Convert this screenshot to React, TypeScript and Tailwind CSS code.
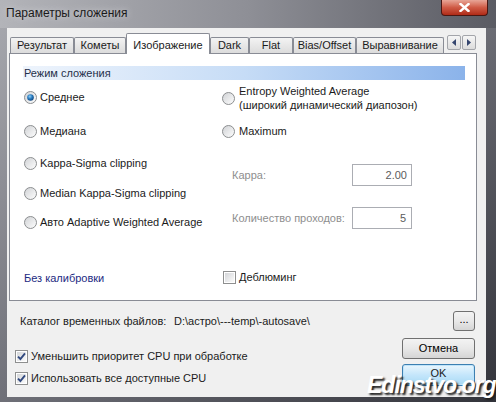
import type { ReactNode } from 'react'

const tabs = [
  { label: 'Результат', w: 'w-[64px]' },
  { label: 'Кометы', w: 'w-[52px]' },
  { label: 'Изображение', w: 'w-[84px]', active: true },
  { label: 'Dark', w: 'w-[39px]' },
  { label: 'Flat', w: 'w-[44px]' },
  { label: 'Bias/Offset', w: 'w-[63px]' },
  { label: 'Выравнивание', w: 'w-[88px]' },
]

function Radio({ checked }: { checked?: boolean }) {
  return (
    <svg width="13" height="13" viewBox="0 0 13 13" className="shrink-0">
      <defs>
        <linearGradient id="rb" x1="0" y1="0" x2="1" y2="1">
          <stop offset="0" stopColor="#cfd1d4" />
          <stop offset="1" stopColor="#ffffff" />
        </linearGradient>
        <radialGradient id="rd" cx="0.4" cy="0.35" r="0.75">
          <stop offset="0" stopColor="#8fd0f7" />
          <stop offset="0.45" stopColor="#2a7cc0" />
          <stop offset="1" stopColor="#0b3a70" />
        </radialGradient>
      </defs>
      <circle cx="6.5" cy="6.5" r="6" fill="url(#rb)" stroke="#8c8e90" />
      {checked && <circle cx="6.5" cy="6.5" r="3.3" fill="url(#rd)" />}
    </svg>
  )
}

function Check({ checked }: { checked?: boolean }) {
  return (
    <svg width="13" height="13" viewBox="0 0 13 13" className="shrink-0">
      <defs>
        <linearGradient id="cb" x1="0" y1="0" x2="1" y2="1">
          <stop offset="0" stopColor="#d3d5d8" />
          <stop offset="1" stopColor="#fbfbfb" />
        </linearGradient>
      </defs>
      <rect x="0.5" y="0.5" width="12" height="12" fill="#fff" stroke="#8e8f8f" />
      <rect x="2" y="2" width="9" height="9" fill="url(#cb)" />
      {checked && (
        <path d="M3 6.6 L5.4 9 L10 3.4" fill="none" stroke="#31497f" strokeWidth="1.9" />
      )}
    </svg>
  )
}

function RadioRow({ children, checked, gap = 'gap-[3px]' }: { children: ReactNode; checked?: boolean; gap?: string }) {
  return (
    <div className={`flex h-[20px] items-center whitespace-nowrap ${gap}`}>
      <Radio checked={checked} />
      <span>{children}</span>
    </div>
  )
}

function Arrow({ dir }: { dir: 'l' | 'r' }) {
  return (
    <div className="flex h-[15px] w-[14px] items-center justify-center rounded-[2px] border border-[#a3a5aa] bg-gradient-to-b from-[#f6f6f6] to-[#dcdcdc]">
      <svg width="4" height="7" viewBox="0 0 4 7">
        <path d={dir === 'l' ? 'M4 0 L0 3.5 L4 7 Z' : 'M0 0 L4 3.5 L0 7 Z'} fill="#34456e" />
      </svg>
    </div>
  )
}

function Btn({ children, className = '' }: { children: ReactNode; className?: string }) {
  return (
    <div
      className={`flex items-center justify-center rounded-[3px] border border-[#707070] bg-gradient-to-b from-[#f3f3f3] via-[#e8e8e8] to-[#d5d5d5] text-[#000] ${className}`}
    >
      {children}
    </div>
  )
}

export default function App() {
  return (
    <div className="relative flex h-[402px] w-[496px] flex-col overflow-hidden whitespace-nowrap bg-gradient-to-br from-[#a9aab0] via-[#6f7078] to-[#33343b] font-['Liberation_Sans',sans-serif] text-[11px] text-[#1b1b1b]">
      {/* Заголовок окна */}
      <div className="flex h-[28px] shrink-0 items-start bg-gradient-to-r from-[#b3b4b9] via-[#8e8f96] to-[#5a5b63]">
        <span className="pl-[6px] pt-[4px] text-[12px] text-[#1a1a1a] [text-shadow:0_0_6px_#d8d8dc]">
          Параметры сложения
        </span>
        <div className="ml-auto mr-[8px] flex h-[16px] w-[47px] items-center justify-center rounded-b-[4px] border border-t-0 border-[#4a1712] bg-gradient-to-b from-[#e7a597] via-[#cf5a45] to-[#b02a16]">
          <svg width="11" height="9" viewBox="0 0 11 9">
            <path d="M1.5 1 L9.5 8 M9.5 1 L1.5 8" stroke="#fff" strokeWidth="2.4" strokeLinecap="square" />
          </svg>
        </div>
      </div>

      <div className="flex flex-1">
        <div className="w-[7px]" />
        <div className="flex w-[479px] flex-col bg-[#f0f0f0]">
          {/* Вкладки */}
          <div className="ml-[2px] mt-[5px] flex h-[20px] w-[468px] items-end">
            <div className="ml-[1px] flex h-full items-end">
              {tabs.map((t) =>
                t.active ? (
                  <div
                    key={t.label}
                    className={`relative z-10 -mb-[1px] flex h-[21px] ${t.w} items-start justify-center rounded-t-[2px] border border-b-0 border-[#898c95] bg-white pt-[3px]`}
                  >
                    {t.label}
                  </div>
                ) : (
                  <div
                    key={t.label}
                    className={`flex h-[16px] ${t.w} items-center justify-center rounded-t-[2px] border border-b-0 border-[#898c95] bg-gradient-to-b from-[#f3f3f3] to-[#dcdcdc]`}
                  >
                    {t.label}
                  </div>
                ),
              )}
            </div>
            <div className="mb-auto ml-auto mr-[1px] mt-[2px] flex gap-[1px]">
              <Arrow dir="l" />
              <Arrow dir="r" />
            </div>
          </div>

          <div className="ml-[2px] flex h-[248px] w-[468px] flex-col border border-[#898c95] bg-white">
            <div className="ml-[13px] mt-[12px] flex h-[14px] w-[442px] items-center bg-gradient-to-r from-[#eef4fc] via-[#c6dcf6] to-[#8bb3ea] pl-[1px] text-[#1f2f4a]">
              Режим сложения
            </div>

            <div className="flex">
              <div className="ml-[14px] flex w-[198px] flex-col">
                <div className="mt-[7px]">
                  <RadioRow checked>Среднее</RadioRow>
                </div>
                <div className="mt-[14px]">
                  <RadioRow>Медиана</RadioRow>
                </div>
                <div className="mt-[12px]">
                  <RadioRow>Kappa-Sigma clipping</RadioRow>
                </div>
                <div className="mt-[10px]">
                  <RadioRow>Median Kappa-Sigma clipping</RadioRow>
                </div>
                <div className="mt-[9px]">
                  <RadioRow>Авто Adaptive Weighted Average</RadioRow>
                </div>
                <div className="mt-[36px] flex h-[20px] items-center text-[#1d2b82]">Без калибровки</div>
              </div>

              <div className="flex flex-col">
                <div className="mt-[4px] flex h-[28px] items-center gap-[4px]">
                  <Radio />
                  <div className="flex flex-col leading-[14px]">
                    <span>Entropy Weighted Average</span>
                    <span>(широкий динамический диапозон)</span>
                  </div>
                </div>
                <div className="mt-[9px]">
                  <RadioRow gap="gap-[4px]">Maximum</RadioRow>
                </div>
                <div className="mt-[23px] flex h-[22px] items-center">
                  <span className="ml-[10px] w-[120px] text-[#8e8e8e]">Карра:</span>
                  <div className="flex h-[22px] w-[60px] items-center justify-end border border-[#abadb3] pr-[4px] text-[#5c5c5c]">
                    2.00
                  </div>
                </div>
                <div className="mt-[21px] flex h-[22px] items-center">
                  <span className="ml-[10px] w-[120px] text-[#8e8e8e]">Количество проходов:</span>
                  <div className="flex h-[22px] w-[60px] items-center justify-end border border-[#abadb3] pr-[5px] text-[#5c5c5c]">
                    5
                  </div>
                </div>
                <div className="ml-[1px] mt-[38px] flex h-[20px] items-center gap-[3px]">
                  <Check />
                  <span>Деблюминг</span>
                </div>
              </div>
            </div>
          </div>

          {/* Каталог временных файлов */}
          <div className="mt-[10px] flex h-[20px] items-center">
            <span className="ml-[13px] w-[154px]">Каталог временных файлов:</span>
            <span>D:\астро\---temp\-autosave\</span>
            <Btn className="ml-auto mr-[11px] h-[20px] w-[22px] pb-[3px]">...</Btn>
          </div>

          <div className="flex">
            <div className="ml-[8px] flex flex-col">
              <div className="mt-[19px] flex h-[13px] items-center gap-[3px]">
                <Check checked />
                <span>Уменьшить приоритет CPU при обработке</span>
              </div>
              <div className="mt-[9px] flex h-[13px] items-center gap-[3px]">
                <Check checked />
                <span>Использовать все доступные CPU</span>
              </div>
            </div>
            <div className="ml-auto mr-[11px] flex flex-col">
              <Btn className="mt-[7px] h-[21px] w-[73px]">Отмена</Btn>
              <div className="mt-[5px] flex h-[22px] w-[73px] items-center justify-center rounded-[3px] border border-[#3c7fb1] bg-gradient-to-b from-[#eaf6fd] via-[#c4e6fb] to-[#a7d9f5] pb-[4px] shadow-[inset_0_0_0_1px_#bfe4fa]">
                OK
              </div>
            </div>
          </div>
        </div>
      </div>
      <div className="h-[5px] shrink-0" />

      {/* Водяной знак */}
      <div className="absolute left-[367px] top-[368px] text-[23px] font-bold italic tracking-[-1px] text-white [text-shadow:2px_2px_2px_#1e1e1e]">
        Edinstvo.org
      </div>
    </div>
  )
}
